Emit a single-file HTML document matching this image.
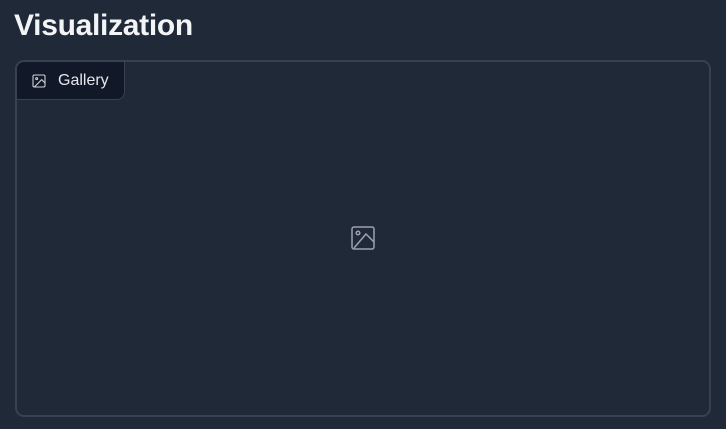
<!DOCTYPE html>
<html><head><style>
body{margin:0;width:726px;height:429px;background:#1f2937;font-family:"Liberation Sans",sans-serif;overflow:hidden;position:relative}
h1{position:absolute;left:14px;top:9px;margin:0;font-size:30px;font-weight:bold;color:#f3f4f6;letter-spacing:-0.3px}
.box{position:absolute;left:15px;top:60px;width:692px;height:353px;border:2px solid #374151;border-radius:9px}
.lbl{position:absolute;left:-1px;top:-1px;width:107px;height:37px;background:#111827;border:1px solid #374151;border-radius:8px 0 8px 0;color:#e5e7eb;font-size:16px}
.lbl svg{position:absolute;left:14px;top:11px}
.lbl span{position:absolute;left:41px;top:10px}
.ic{position:absolute;left:334px;top:164px}
</style></head><body>
<h1>Visualization</h1>
<div class="box">
<div class="lbl"><svg width="16" height="16" viewBox="0 0 24 24" fill="none" stroke="#d1d5db" stroke-width="1.6"><rect x="3" y="3" width="18" height="18" rx="2"/><circle cx="8.5" cy="8.5" r="1.5"/><polyline points="21 15 16 10 5 21"/></svg><span>Gallery</span></div>
<svg class="ic" width="24" height="24" viewBox="0 0 24 24" fill="none" stroke="#9ca3af" stroke-width="1.5"><rect x="1" y="1" width="22" height="22" rx="2"/><circle cx="7" cy="7" r="1.8"/><polyline points="23 16 15 8 3 22"/></svg>
</div>
</body></html>
